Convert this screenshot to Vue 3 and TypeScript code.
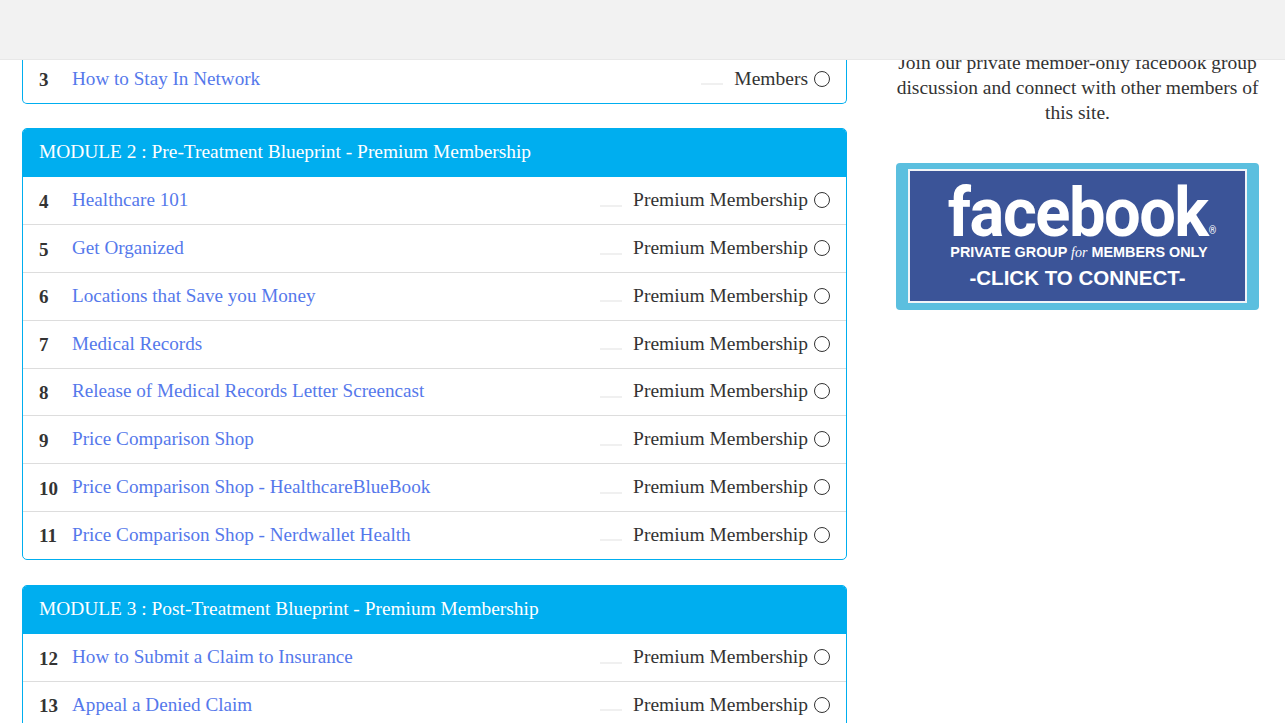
<script setup lang="ts">
interface Lesson {
  num: number
  title: string
  access: string
}

interface Module {
  id: number
  heading?: string
  lessons: Lesson[]
}

const premium = 'Premium Membership'

const modules: Module[] = [
  {
    id: 1,
    lessons: [{ num: 3, title: 'How to Stay In Network', access: 'Members' }]
  },
  {
    id: 2,
    heading: 'MODULE 2 : Pre-Treatment Blueprint - Premium Membership',
    lessons: [
      { num: 4, title: 'Healthcare 101', access: premium },
      { num: 5, title: 'Get Organized', access: premium },
      { num: 6, title: 'Locations that Save you Money', access: premium },
      { num: 7, title: 'Medical Records', access: premium },
      { num: 8, title: 'Release of Medical Records Letter Screencast', access: premium },
      { num: 9, title: 'Price Comparison Shop', access: premium },
      { num: 10, title: 'Price Comparison Shop - HealthcareBlueBook', access: premium },
      { num: 11, title: 'Price Comparison Shop - Nerdwallet Health', access: premium }
    ]
  },
  {
    id: 3,
    heading: 'MODULE 3 : Post-Treatment Blueprint - Premium Membership',
    lessons: [
      { num: 12, title: 'How to Submit a Claim to Insurance', access: premium },
      { num: 13, title: 'Appeal a Denied Claim', access: premium }
    ]
  }
]
</script>

<template>
  <div class="page">
    <header class="top-bar"></header>

    <main class="layout">
      <section class="modules">
        <div v-for="mod in modules" :key="mod.id" class="module" :class="{ 'module-cut': !mod.heading }">
          <h2 v-if="mod.heading" class="module-heading">{{ mod.heading }}</h2>
          <div v-for="lesson in mod.lessons" :key="lesson.num" class="lesson">
            <span class="lesson-num">{{ lesson.num }}</span>
            <a class="lesson-title" href="#">{{ lesson.title }}</a>
            <span class="lesson-dash"></span>
            <span class="lesson-access">{{ lesson.access }}</span>
            <span class="lesson-check"></span>
          </div>
        </div>
      </section>

      <aside class="sidebar">
        <p class="sidebar-text">
          Join our private member-only facebook group discussion and connect with other members of this site.
        </p>
        <a class="fb-banner" href="#">
          <span class="fb-inner">
            <span class="fb-word">facebook<sup class="fb-reg">®</sup></span>
            <span class="fb-private">PRIVATE GROUP <em class="fb-for">for</em> MEMBERS ONLY</span>
            <span class="fb-connect">-CLICK TO CONNECT-</span>
          </span>
        </a>
      </aside>
    </main>
  </div>
</template>

<style>
html,
body {
  margin: 0;
  background: #fff;
}
</style>

<style scoped>
.page {
  position: relative;
  height: 723px;
  overflow: hidden;
  font-family: "Liberation Serif", Georgia, serif;
  color: #333;
}

.top-bar {
  position: absolute;
  top: 0;
  left: 0;
  right: 0;
  height: 59px;
  background: #f2f2f2;
  border-bottom: 1px solid #e8e8e8;
  z-index: 2;
}

.layout {
  display: grid;
  grid-template-columns: 825px 363px;
  column-gap: 49px;
  padding-left: 22px;
  height: 723px;
  overflow: hidden;
}

.modules {
  padding-top: 56px;
}

.module {
  margin-bottom: 25.4px;
  border: 1px solid #00aeef;
  border-radius: 5px;
  overflow: hidden;
}

.module-cut {
  margin-bottom: 24.6px;
  border-top: none;
  border-radius: 0 0 5px 5px;
}

.module-heading {
  display: flex;
  align-items: center;
  box-sizing: border-box;
  height: 49px;
  margin: -1px -1px 0;
  padding: 0 17px 1px;
  background: #00aeef;
  color: #fff;
  font-size: 19.4px;
  font-weight: 400;
}

.lesson {
  display: flex;
  align-items: center;
  box-sizing: border-box;
  height: 47.8px;
  padding: 0 16px 1px;
  border-bottom: 1px solid #ddd;
  font-size: 19.5px;
}

.lesson:last-child {
  height: 46.8px;
  border-bottom: none;
}

.lesson-num {
  width: 33px;
  flex: none;
  padding-top: 3px;
  font-size: 19px;
  font-weight: 700;
  color: #333;
}

.lesson-title {
  color: #5578eb;
  font-size: 19.15px;
  text-decoration: none;
}

.lesson-dash {
  width: 22px;
  height: 2px;
  margin: 11px 11px 0 auto;
  background: #f0f0f0;
}

.lesson-check {
  box-sizing: border-box;
  width: 16px;
  height: 16px;
  margin-left: 6px;
  border: 1.3px solid #333;
  border-radius: 50%;
}

.sidebar {
  padding-top: 50px;
}

.sidebar-text {
  margin: 0 0 38px;
  font-size: 19.5px;
  line-height: 25px;
  text-align: center;
}

.fb-banner {
  display: block;
  box-sizing: border-box;
  height: 147px;
  padding: 6px 12px 7px;
  background: #5bbfdf;
  border-radius: 4px;
  text-decoration: none;
}

.fb-inner {
  display: flex;
  flex-direction: column;
  align-items: center;
  box-sizing: border-box;
  height: 100%;
  background: #3b5498;
  border: 2px solid #f1f4f8;
  color: #fff;
  font-family: "Liberation Sans", sans-serif;
  font-weight: 700;
}

.fb-word {
  position: relative;
  margin-top: 13px;
  font-family: Roboto, "Liberation Sans", sans-serif;
  font-size: 68px;
  font-weight: 700;
  line-height: 58px;
  letter-spacing: -1.6px;
  transform: scaleX(0.957);
}

.fb-reg {
  position: absolute;
  right: -9px;
  bottom: 6px;
  font-size: 10px;
  line-height: 1;
  letter-spacing: 0;
  font-weight: 400;
}

.fb-private {
  margin: 1px 0 0 3px;
  font-size: 14.4px;
  line-height: 18px;
  white-space: nowrap;
}

.fb-for {
  font-family: "Liberation Serif", serif;
  font-size: 14px;
  font-weight: 400;
}

.fb-connect {
  margin-top: 4px;
  font-size: 20.5px;
  line-height: 24px;
  white-space: nowrap;
}
</style>
